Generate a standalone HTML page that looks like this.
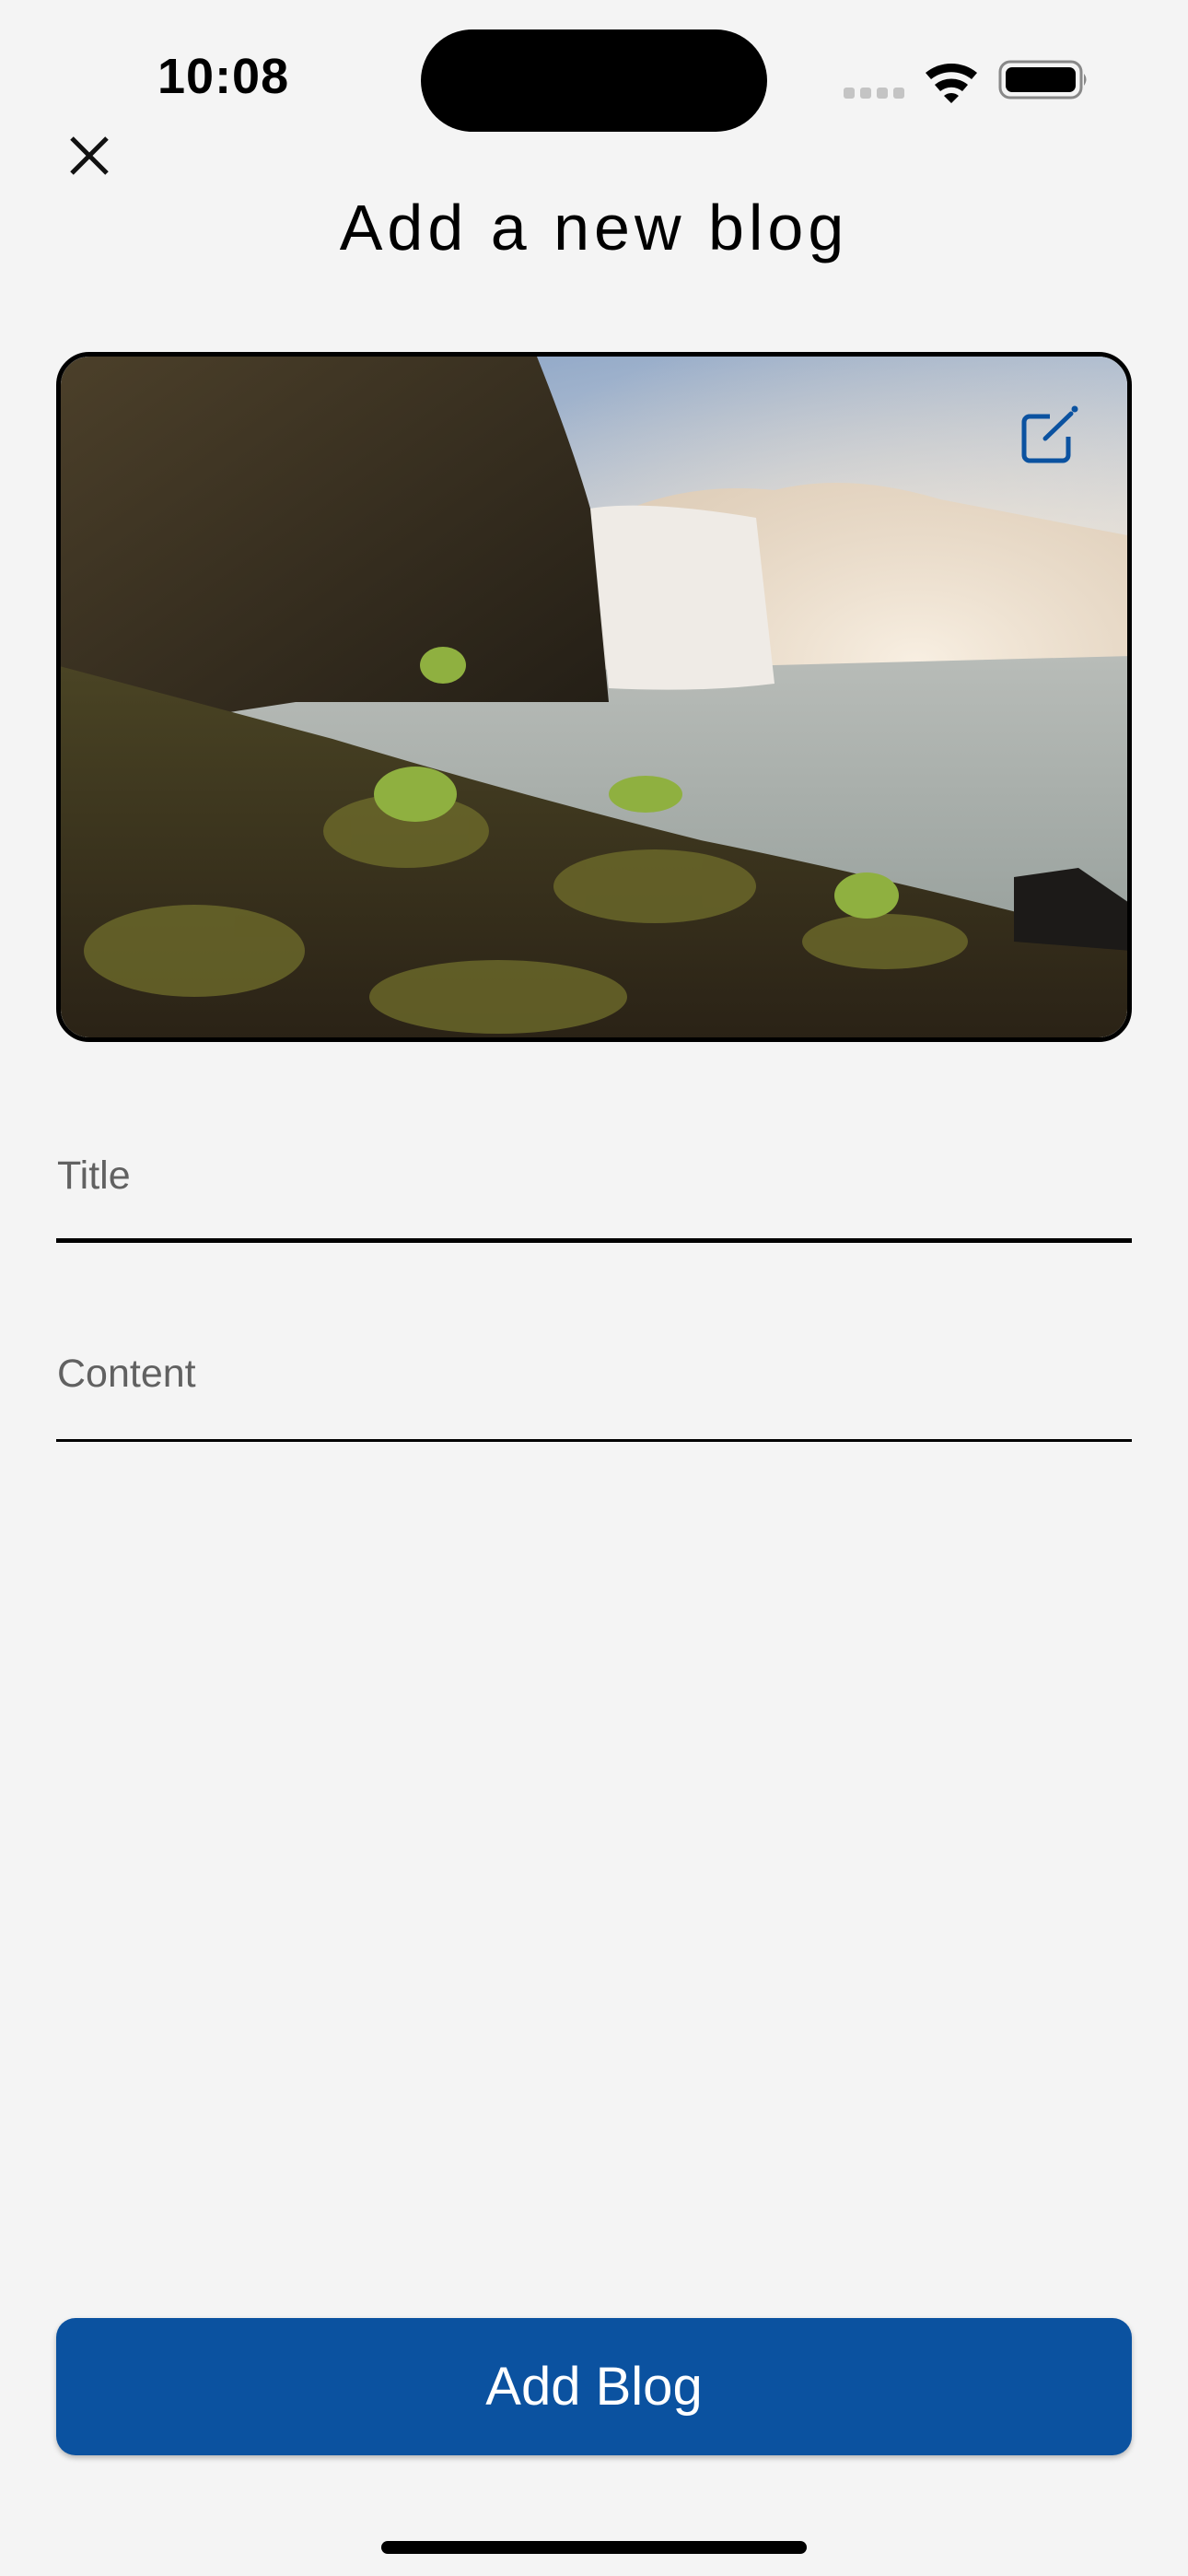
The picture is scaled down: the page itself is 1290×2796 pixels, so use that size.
<!DOCTYPE html>
<html><head><meta charset="utf-8"><style>
html,body{margin:0;padding:0}
body{width:1290px;height:2796px;background:#f4f4f4;position:relative;overflow:hidden;font-family:"Liberation Sans",sans-serif}
.a{position:absolute}
</style></head><body>
<div class="a" style="left:171px;top:52px;font-size:54px;font-weight:bold;color:#000;letter-spacing:1px">10:08</div>
<div class="a" style="left:457px;top:32px;width:376px;height:111px;background:#000;border-radius:56px"></div>
<svg class="a" style="left:900px;top:40px" width="300" height="100" viewBox="900 40 300 100">
<g fill="#c4c4c4"><rect x="916" y="95" width="12" height="12" rx="3"/><rect x="934" y="95" width="12" height="12" rx="3"/><rect x="952" y="95" width="12" height="12" rx="3"/><rect x="970" y="95" width="12" height="12" rx="3"/></g>
<path d="M1005 79 A44 44 0 0 1 1061 79 L1055 86 A35 35 0 0 0 1011 86Z M1015 92 A28 28 0 0 1 1051 92 L1045 99 A19 19 0 0 0 1021 99Z M1025 104 A12 12 0 0 1 1041 104 L1033 112Z" fill="#000"/>
<rect x="1086" y="67" width="88" height="39" rx="11" fill="none" stroke="#888" stroke-width="3"/>
<rect x="1092" y="73" width="76" height="27" rx="7" fill="#000"/>
<path d="M1177 80 q5 6 0 13z" fill="#888"/>
</svg>
<svg class="a" style="left:74px;top:146px" width="46" height="46" viewBox="0 0 46 46"><path d="M4 4 L42 42 M42 4 L4 42" stroke="#111" stroke-width="5"/></svg>
<div class="a" style="left:0;width:1290px;top:207px;text-align:center;font-size:70px;color:#000;letter-spacing:5px">Add a new blog</div>
<div class="a" style="left:61px;top:382px;width:1168px;height:749px;border:5px solid #000;box-sizing:border-box;border-radius:36px;overflow:hidden">
<svg width="1158" height="739" viewBox="5 5 1158 739" preserveAspectRatio="none">
<defs>
<linearGradient id="sky" x1="0" y1="0" x2="0.3" y2="1"><stop offset="0" stop-color="#7d9ac2"/><stop offset="0.5" stop-color="#d6d9dc"/><stop offset="1" stop-color="#f2e6d6"/></linearGradient>
<radialGradient id="mist" cx="0.8" cy="0.45" r="0.5"><stop offset="0" stop-color="#f8efe2"/><stop offset="1" stop-color="#e8d8c4" stop-opacity="0"/></radialGradient>
<linearGradient id="water" x1="0" y1="0" x2="0" y2="1"><stop offset="0" stop-color="#b8bcb8"/><stop offset="1" stop-color="#8d9793"/></linearGradient>
<linearGradient id="cliff" x1="0" y1="0" x2="1" y2="1"><stop offset="0" stop-color="#4c402a"/><stop offset="1" stop-color="#221d15"/></linearGradient>
<linearGradient id="gr" x1="0" y1="0" x2="0" y2="1"><stop offset="0" stop-color="#4a4424"/><stop offset="1" stop-color="#2a2216"/></linearGradient>
</defs>
<rect width="1168" height="749" fill="url(#sky)"/>
<path d="M600 180 Q680 140 780 150 Q860 130 960 160 L1168 200 L1168 380 L600 380Z" fill="#d8c6b0"/>
<rect width="1168" height="749" fill="url(#mist)"/>
<path d="M0 360 L1168 330 L1168 749 L0 749Z" fill="url(#water)"/>
<path d="M580 170 Q640 160 760 180 L780 360 Q700 370 600 365Z" fill="#efebe6"/>
<path d="M0 0 L520 0 Q560 100 580 170 L600 380 L260 380 L0 420Z" fill="url(#cliff)"/>
<path d="M0 340 Q150 380 300 420 Q500 480 700 530 Q900 570 1168 640 L1168 749 L0 749Z" fill="url(#gr)"/>
<g fill="#6d6a2a" opacity="0.8"><ellipse cx="380" cy="520" rx="90" ry="40"/><ellipse cx="650" cy="580" rx="110" ry="40"/><ellipse cx="150" cy="650" rx="120" ry="50"/><ellipse cx="900" cy="640" rx="90" ry="30"/><ellipse cx="480" cy="700" rx="140" ry="40"/></g>
<g fill="#8fb040"><ellipse cx="390" cy="480" rx="45" ry="30"/><ellipse cx="420" cy="340" rx="25" ry="20"/><ellipse cx="640" cy="480" rx="40" ry="20"/><ellipse cx="880" cy="590" rx="35" ry="25"/></g>
<path d="M1040 570 L1110 560 L1168 600 L1168 650 L1040 640Z" fill="#1c1a18"/>
</svg>
<svg class="a" style="left:1040px;top:28px" width="80" height="100" viewBox="1106 415 80 100"><path d="M1140 452 H1118 a6 6 0 0 0 -6 6 v36 a6 6 0 0 0 6 6 h36 a6 6 0 0 0 6 -6 V474" fill="none" stroke="#0b52a0" stroke-width="5"/><path d="M1135 476 L1163 449" stroke="#0b52a0" stroke-width="5" stroke-linecap="round"/><circle cx="1167" cy="444" r="3.5" fill="#0b52a0"/></svg>
</div>
<div class="a" style="left:62px;top:1252px;font-size:43px;color:#616161">Title</div>
<div class="a" style="left:61px;top:1344px;width:1168px;height:5px;background:#000"></div>
<div class="a" style="left:62px;top:1467px;font-size:43px;color:#616161">Content</div>
<div class="a" style="left:61px;top:1562px;width:1168px;height:3px;background:#000"></div>
<div class="a" style="left:61px;top:2516px;width:1168px;height:149px;background:#0b52a0;border-radius:21px;box-shadow:0 3px 6px rgba(0,0,0,.25);color:#fff;font-size:58px;text-align:center;line-height:149px">Add Blog</div>
<div class="a" style="left:414px;top:2758px;width:462px;height:14px;background:#000;border-radius:7px"></div>
</body></html>
